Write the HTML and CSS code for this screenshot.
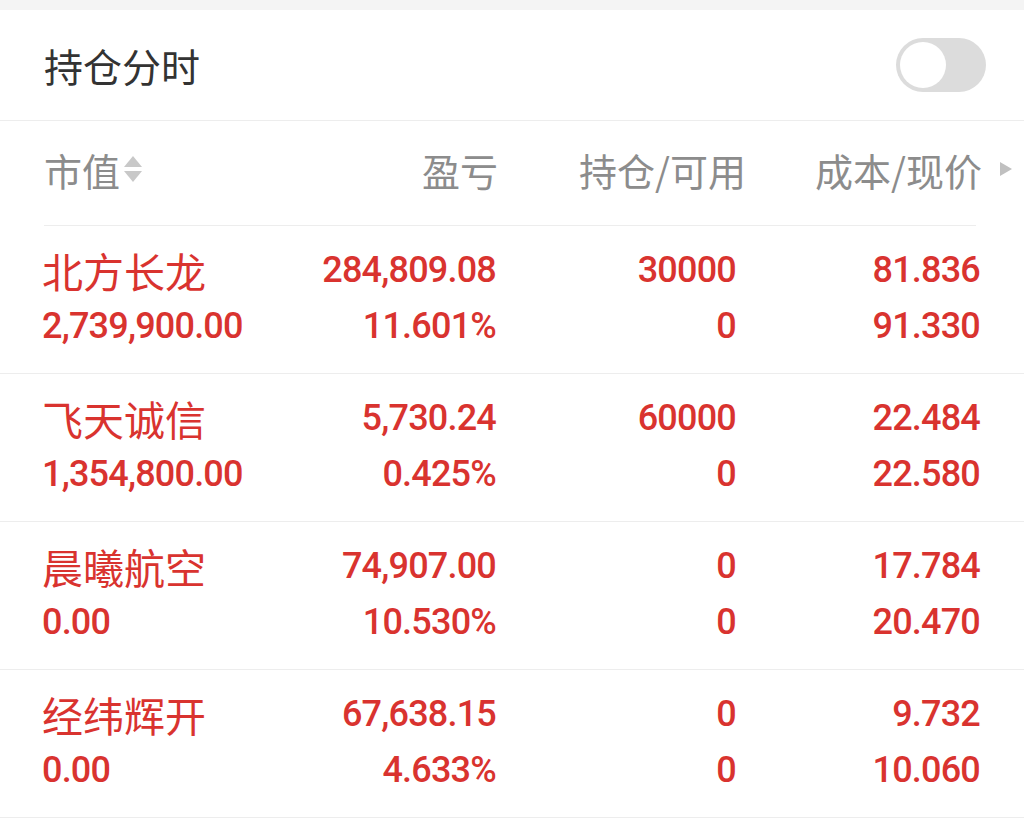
FILE: index.html
```html
<!DOCTYPE html>
<html lang="zh-CN">
<head>
    <meta charset="UTF-8">
    <meta name="viewport" content="width=device-width, initial-scale=1.0">
    <title>持仓</title>
    <link rel="stylesheet" href="styles.css">
</head>
<body>
    <div class="top-band"></div>

    <!-- 持仓分时 开关 -->
    <div class="title-row">
        <span class="title">持仓分时</span>
        <div class="switch"><span class="knob"></span></div>
    </div>

    <!-- 表头 -->
    <div class="table-head">
        <div class="head-cell first">市值<span class="sort"><i class="up"></i><i class="down"></i></span></div>
        <div class="head-cell">盈亏</div>
        <div class="head-cell wide">持仓/可用</div>
        <div class="head-cell">成本/现价<span class="more"></span></div>
    </div>

    <!-- 持仓列表 -->
    <div class="rows">
        <div class="row">
            <div class="cell first"><span class="name">北方长龙</span><span>2,739,900.00</span></div>
            <div class="cell"><span>284,809.08</span><span>11.601%</span></div>
            <div class="cell"><span>30000</span><span>0</span></div>
            <div class="cell"><span>81.836</span><span>91.330</span></div>
        </div>
        <div class="row">
            <div class="cell first"><span class="name">飞天诚信</span><span>1,354,800.00</span></div>
            <div class="cell"><span>5,730.24</span><span>0.425%</span></div>
            <div class="cell"><span>60000</span><span>0</span></div>
            <div class="cell"><span>22.484</span><span>22.580</span></div>
        </div>
        <div class="row">
            <div class="cell first"><span class="name">晨曦航空</span><span>0.00</span></div>
            <div class="cell"><span>74,907.00</span><span>10.530%</span></div>
            <div class="cell"><span>0</span><span>0</span></div>
            <div class="cell"><span>17.784</span><span>20.470</span></div>
        </div>
        <div class="row">
            <div class="cell first"><span class="name">经纬辉开</span><span>0.00</span></div>
            <div class="cell"><span>67,638.15</span><span>4.633%</span></div>
            <div class="cell"><span>0</span><span>0</span></div>
            <div class="cell"><span>9.732</span><span>10.060</span></div>
        </div>
    </div>
</body>
</html>
```

FILE: styles.css
```css
:root {
    --red: #d9332f;
    --head-gray: #8c8c8c;
    --line: #ededed;
}

body {
    margin: 0;
    background: #fff;
    font-family: Roboto, "Noto Sans CJK SC", sans-serif;
    overflow: hidden;
}

.top-band {
    height: 10px;
    background: #f4f4f4;
}

.title-row {
    display: flex;
    align-items: center;
    justify-content: space-between;
    height: 111px;
    padding: 0 38px 0 44px;
    border-bottom: 1px solid var(--line);
    box-sizing: border-box;
}

.title {
    font-family: "Noto Sans CJK SC", sans-serif;
    font-size: 39px;
    color: #333;
}

.switch {
    width: 90px;
    height: 54px;
    border-radius: 27px;
    background: #dcdcdc;
    display: flex;
    align-items: center;
    padding: 0 4px;
    box-sizing: border-box;
}

.knob {
    width: 46px;
    height: 46px;
    border-radius: 50%;
    background: #fff;
}

.table-head,
.row {
    display: grid;
    grid-template-columns: 220px 234px 240px 244px;
}

.table-head {
    height: 96px;
    padding-bottom: 8px;
    align-items: center;
    margin: 0 48px 0 44px;
    border-bottom: 1px solid var(--line);
}

.head-cell {
    font-family: "Noto Sans CJK SC", sans-serif;
    font-size: 38px;
    color: var(--head-gray);
    display: flex;
    justify-content: flex-end;
    align-items: center;
}

.head-cell.first {
    justify-content: flex-start;
}

.head-cell.wide {
    margin-right: -8px;
}

.sort {
    display: flex;
    flex-direction: column;
    gap: 4px;
    margin-left: 4px;
}

.sort i {
    width: 0;
    height: 0;
    border-left: 9px solid transparent;
    border-right: 9px solid transparent;
}

.sort .up {
    border-bottom: 11px solid #c8c8c8;
}

.sort .down {
    border-top: 11px solid #c8c8c8;
}

.more {
    width: 0;
    height: 0;
    border-top: 7px solid transparent;
    border-bottom: 7px solid transparent;
    border-left: 12px solid #c0c0c0;
    margin-left: 18px;
    margin-right: -30px;
}

.row {
    padding: 16px 44px 19px 42px;
    border-bottom: 1px solid var(--line);
}

.cell {
    display: flex;
    flex-direction: column;
    align-items: flex-end;
    color: var(--red);
    font-size: 36px;
    font-weight: 500;
    letter-spacing: -0.8px;
    line-height: 56px;
    white-space: nowrap;
}

.cell.first {
    align-items: flex-start;
}

.name {
    font-family: "Noto Sans CJK SC", sans-serif;
    font-size: 41px;
    font-weight: 400;
    letter-spacing: 0;
}
```
